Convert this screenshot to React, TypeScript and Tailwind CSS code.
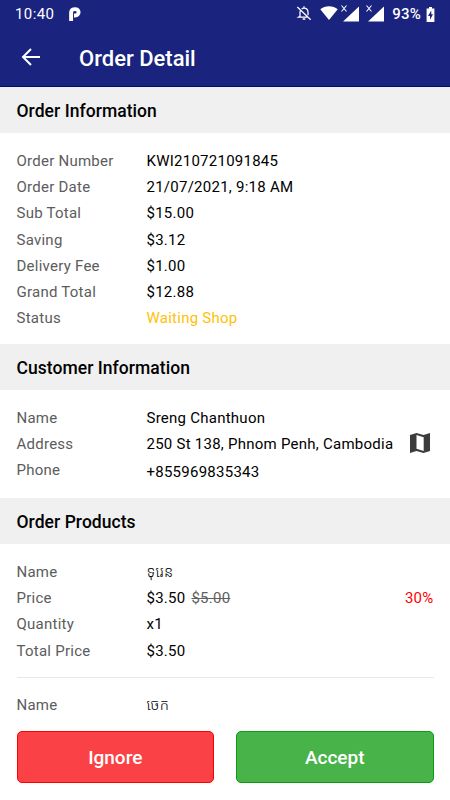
import type { ReactNode } from "react";

function StatusBar() {
  return (
    <div className="flex h-7 items-center justify-between pl-[15px] pr-[15px] text-[15px]">
      <div className="flex items-center gap-[15px]">
        <span className="tracking-[0.4px]">10:40</span>
        <svg width="12" height="14" viewBox="0 0 12 14" fill="none">
          <path
            d="M2.1 14V5.4C2.1 3.2 4 2.1 6 2.1C8.2 2.1 9.6 3.5 9.6 5.3C9.6 7.2 8.2 8.5 6.2 8.5H5"
            stroke="white"
            strokeWidth="3.9"
          />
        </svg>
      </div>
      <div className="flex items-center">
        <svg className="-mt-0.5" width="16" height="16" viewBox="0 0 24 24" fill="none" stroke="white" strokeWidth="1.9">
          <path d="M2 3l20 19M6.500 8.500C6 9.500 6 10.500 6 11v6l-2 1.200H17M8.500 6C9.500 5 10.700 4.600 12 4.600c3.500 0 6 2.700 6 6.400v4.500M12 2v3M10 21h4" />
        </svg>
        <svg className="-mt-0.5 -mr-0.5 ml-[8px]" width="18" height="14" viewBox="0 0 18 14" fill="white">
          <path d="M9 14L0.300 3.200C5-0.700 13-0.700 17.700 3.200z" />
        </svg>
        <Signal />
        <Signal />
        <span className="ml-[6px] font-medium">93%</span>
        <svg className="ml-[5px]" width="9" height="15" viewBox="0 0 9 15">
          <path d="M3 0h3v1.500h2.400V15H0.600V1.500H3z" fill="white" />
          <path d="M5.300 3.500L2 9h2v3.700L7 7.300H5.300z" fill="#1a237e" />
        </svg>
      </div>
    </div>
  );
}

function Signal() {
  return (
    <svg className="-mt-0.5 ml-[3px]" width="22" height="18" viewBox="0 0 22 18">
      <path d="M2.500 1.500l5 6M7.500 1.500l-5 6" stroke="white" strokeWidth="1.100" />
      <path d="M20 2.500V17.500H4z" fill="white" />
    </svg>
  );
}

function SectionTitle({ children }: { children: ReactNode }) {
  return (
    <h2 className="flex h-[46px] shrink-0 items-center bg-[#f0f0f0] pl-[16.5px] pt-[3px] text-[17.5px] font-medium tracking-[0.05px]">
      {children}
    </h2>
  );
}

function Row({ label, children }: { label: string; children: ReactNode }) {
  return (
    <div className="flex h-[26.25px] items-center">
      <span className="w-[130px] shrink-0 text-[#5c5c5c]">{label}</span>
      {children}
    </div>
  );
}

export default function App() {
  return (
    <div className="flex h-[800px] w-[450px] flex-col overflow-hidden bg-white font-['Roboto','Noto_Sans_Khmer',sans-serif] text-[15px] tracking-[0.25px] text-black">
      <header className="h-[87px] shrink-0 border-b border-[#000c74] bg-[#1a237e] text-white">
        <StatusBar />
        <div className="flex h-[58px] items-center pl-[21px]">
          <svg width="20" height="18" viewBox="0 0 20 18" fill="none" stroke="white" strokeWidth="2">
            <path d="M19 9H2M10 1L2 9l8 8" />
          </svg>
          <h1 className="ml-[38px] pt-0.5 text-[22px] font-medium tracking-normal">Order Detail</h1>
        </div>
      </header>

      <SectionTitle>Order Information</SectionTitle>
      <div className="h-[211px] shrink-0 px-[16.5px] pt-[15px]">
        <Row label="Order Number">KWI210721091845</Row>
        <Row label="Order Date">21/07/2021, 9:18 AM</Row>
        <Row label="Sub Total">$15.00</Row>
        <Row label="Saving">$3.12</Row>
        <Row label="Delivery Fee">$1.00</Row>
        <Row label="Grand Total">$12.88</Row>
        <Row label="Status">
          <span className="text-[#ffc107]">Waiting Shop</span>
        </Row>
      </div>

      <SectionTitle>Customer Information</SectionTitle>
      <div className="h-[108px] shrink-0 px-[16.5px] pt-[15px]">
        <Row label="Name">Sreng Chanthuon</Row>
        <Row label="Address">
          <span className="whitespace-nowrap">250 St 138, Phnom Penh, Cambodia</span>
          <svg className="mb-[3px] ml-auto mr-[3.5px] shrink-0" width="20" height="20" viewBox="0 0 20 20">
            <path d="M0 2l6.500-2 7 2L20 0v18l-6.500 2-7-2L0 20z" fill="#3c3c3c" />
            <path d="M6.500 2l7.200 2.300v13.700l-7.200-2.300z" fill="white" />
          </svg>
        </Row>
        <Row label="Phone">
          <span className="pt-1">+855969835343</span>
        </Row>
      </div>

      <SectionTitle>Order Products</SectionTitle>
      <div className="px-[16.5px] pt-[15px]">
        <Row label="Name">
          <span className="font-light">ទុរេន</span>
        </Row>
        <Row label="Price">
          $3.50
          <span className="ml-[6px] text-[#616161] line-through">$5.00</span>
          <span className="ml-auto text-[#f00]">30%</span>
        </Row>
        <Row label="Quantity">x1</Row>
        <Row label="Total Price">$3.50</Row>
        <div className="mt-[13px] border-t border-[#e8e8e8] pt-[14.5px]">
          <Row label="Name">
            <span className="font-light">ចេក</span>
          </Row>
        </div>
      </div>

      <div className="mt-auto mb-[17px] flex gap-[22px] px-[16.5px] text-[19px] font-medium tracking-normal text-white">
        <button className="h-[52px] flex-1 rounded-[5px] border border-[#ff0000] bg-[#fa4145] pt-0.5">Ignore</button>
        <button className="h-[52px] flex-1 rounded-[5px] border border-[#0a9e0f] bg-[#47b348] pt-0.5">Accept</button>
      </div>
    </div>
  );
}
